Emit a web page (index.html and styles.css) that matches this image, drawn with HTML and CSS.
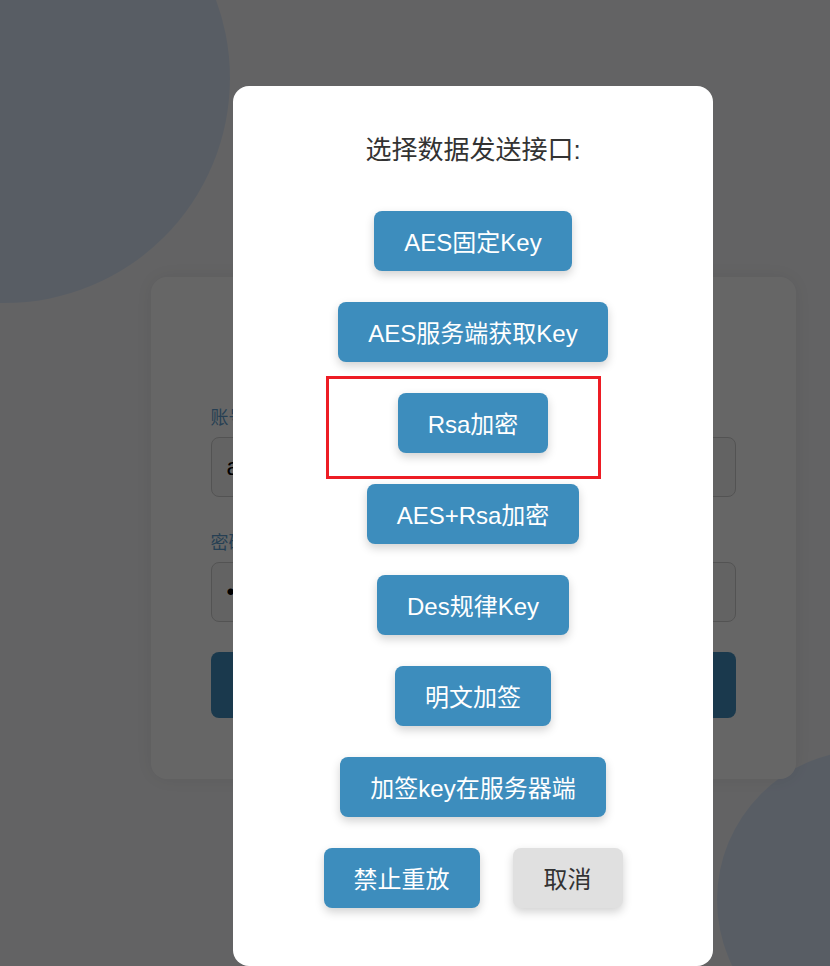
FILE: index.html
```html
<!DOCTYPE html>
<html lang="zh-CN">
<head>
<meta charset="utf-8">
<title>选择数据发送接口</title>
<link rel="stylesheet" href="styles.css">
</head>
<body>
<div class="page">
  <div class="blob blob-tl"></div>
  <div class="blob blob-br"></div>

  <form class="card">
    <label class="field-label">账号</label>
    <input class="field-input" type="text" value="admin">
    <label class="field-label field-label-2">密码</label>
    <input class="field-input" type="password" value="123456">
    <button class="login-btn" type="button" aria-label="登录"></button>
  </form>

  <div class="overlay">
    <div class="modal">
      <h2 class="modal-title">选择数据发送接口:</h2>
      <div class="options">
        <button class="opt" type="button">AES固定Key</button>
        <button class="opt" type="button">AES服务端获取Key</button>
        <button class="opt" type="button">Rsa加密</button>
        <button class="opt" type="button">AES+Rsa加密</button>
        <button class="opt" type="button">Des规律Key</button>
        <button class="opt" type="button">明文加签</button>
        <button class="opt" type="button">加签key在服务器端</button>
        <div class="opt-row">
          <button class="opt" type="button">禁止重放</button>
          <button class="opt opt-cancel" type="button">取消</button>
        </div>
      </div>
      <div class="highlight"></div>
    </div>
  </div>
</div>
</body>
</html>
```

FILE: styles.css
```css
html, body {
  margin: 0;
  padding: 0;
  overflow: hidden;
  height: 966px;
}

body {
  font-family: "Liberation Sans", "Noto Sans CJK SC", sans-serif;
  background: #f8f8fa;
}

.page {
  position: relative;
  width: 830px;
  height: 966px;
  box-sizing: border-box;
  padding: 277px 0 0 116px;
  display: flex;
  justify-content: center;
  align-items: flex-start;
  background: #f8f8fa;
  overflow: hidden;
}

.blob {
  position: absolute;
  border-radius: 50%;
  background: #dde9fb;
}

.blob-tl {
  left: -220px;
  top: -147px;
  width: 450px;
  height: 450px;
}

.blob-br {
  left: 717px;
  top: 750px;
  width: 300px;
  height: 300px;
}

.card {
  position: relative;
  flex: 0 0 645px;
  width: 645px;
  height: 502px;
  box-sizing: border-box;
  padding: 129px 60px 0;
  background: #ffffff;
  border-radius: 16px;
  box-shadow: 0 0 20px rgba(0, 0, 0, 0.08);
  display: flex;
  flex-direction: column;
}

.field-label {
  display: block;
  font-size: 18px;
  line-height: 24px;
  color: #5f9fd0;
  margin-bottom: 7px;
}

.field-label-2 {
  margin-top: 34px;
}

.field-input {
  display: block;
  width: 100%;
  height: 60px;
  box-sizing: border-box;
  padding: 0 15px;
  border: 1px solid #d0d0d0;
  border-radius: 8px;
  background: #f7f7f7;
  font-family: "Liberation Sans", sans-serif;
  font-size: 24px;
  color: #000;
}

.login-btn {
  margin-top: 30px;
  width: 100%;
  height: 66px;
  border: none;
  border-radius: 8px;
  background: #4390c0;
  color: #fff;
  font-family: "Liberation Sans", "Noto Sans CJK SC", sans-serif;
  font-size: 24px;
}

.overlay {
  position: absolute;
  inset: 0;
  box-sizing: border-box;
  background: rgba(0, 0, 0, 0.6);
  display: flex;
  justify-content: center;
  align-items: flex-start;
  padding: 86px 0 0 116px;
}

.modal {
  position: relative;
  flex: 0 0 480px;
  width: 480px;
  height: 880px;
  box-sizing: border-box;
  padding-top: 48px;
  background: #ffffff;
  border-radius: 16px;
}

.modal-title {
  margin: 0;
  font-size: 26px;
  line-height: 32px;
  font-weight: normal;
  color: #333333;
  text-align: center;
}

.options {
  margin-top: 45px;
  display: flex;
  flex-direction: column;
  align-items: center;
  gap: 31px;
}

.opt {
  box-sizing: border-box;
  height: 60px;
  padding: 4px 30px 0;
  border: none;
  border-radius: 8px;
  background: #3d8dbd;
  color: #ffffff;
  font-family: "Liberation Sans", "Noto Sans CJK SC", sans-serif;
  font-size: 24px;
  line-height: 56px;
  white-space: nowrap;
  box-shadow: 0 4px 10px rgba(0, 0, 0, 0.18);
  cursor: pointer;
}

.opt-row {
  display: flex;
  justify-content: center;
  gap: 33px;
}

.opt-cancel {
  padding: 4px 31px 0;
  background: #e0e0e0;
  color: #333333;
}

.highlight {
  position: absolute;
  left: 93px;
  top: 290px;
  width: 275px;
  height: 103px;
  box-sizing: border-box;
  border: 3px solid #ed1c24;
  pointer-events: none;
}
```
